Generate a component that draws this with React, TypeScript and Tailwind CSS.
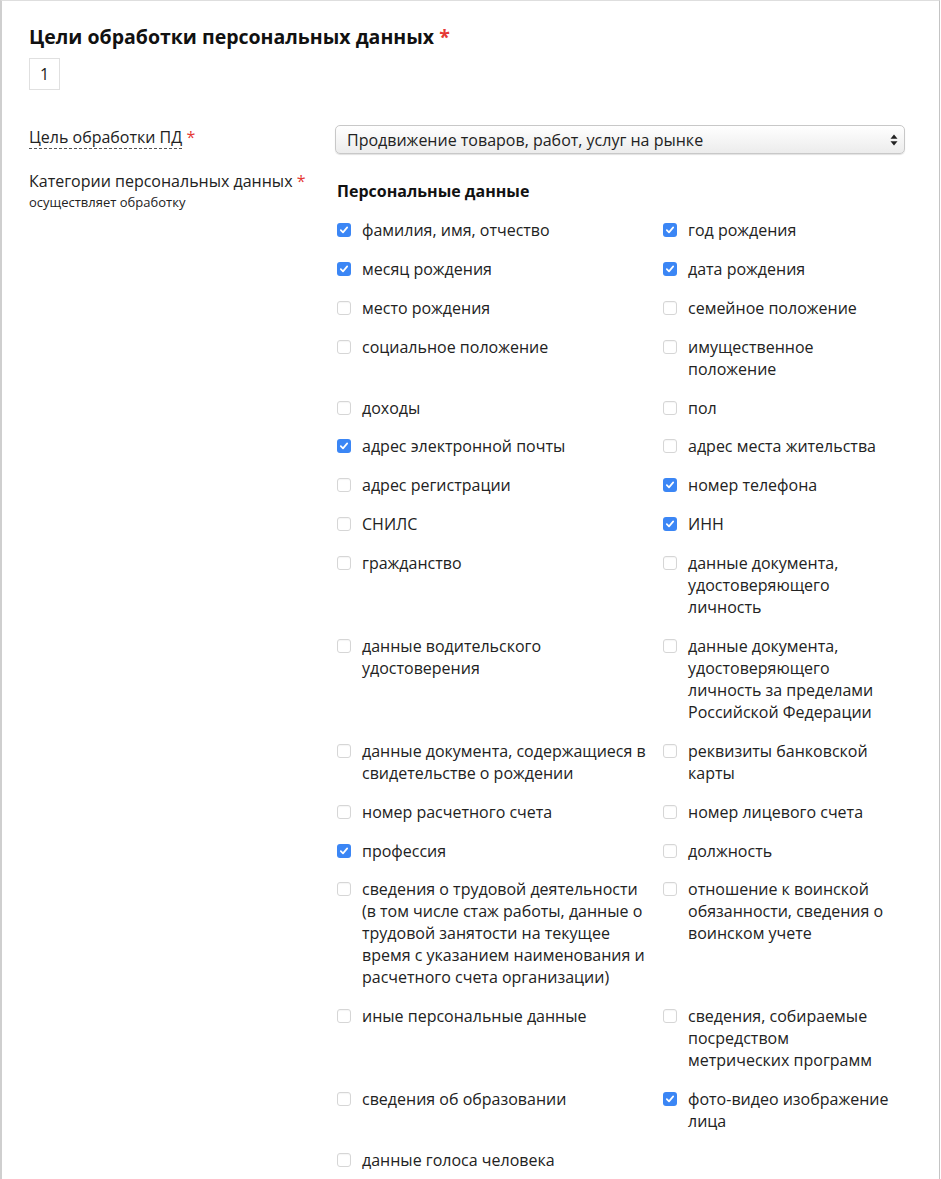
import React from "react";

type Item = { t: string; c?: boolean };

const rows: [Item, Item | null][] = [
  [{ t: "фамилия, имя, отчество", c: true }, { t: "год рождения", c: true }],
  [{ t: "месяц рождения", c: true }, { t: "дата рождения", c: true }],
  [{ t: "место рождения" }, { t: "семейное положение" }],
  [{ t: "социальное положение" }, { t: "имущественное положение" }],
  [{ t: "доходы" }, { t: "пол" }],
  [{ t: "адрес электронной почты", c: true }, { t: "адрес места жительства" }],
  [{ t: "адрес регистрации" }, { t: "номер телефона", c: true }],
  [{ t: "СНИЛС" }, { t: "ИНН", c: true }],
  [{ t: "гражданство" }, { t: "данные документа, удостоверяющего личность" }],
  [
    { t: "данные водительского удостоверения" },
    { t: "данные документа, удостоверяющего личность за пределами Российской Федерации" },
  ],
  [
    { t: "данные документа, содержащиеся в свидетельстве о рождении" },
    { t: "реквизиты банковской карты" },
  ],
  [{ t: "номер расчетного счета" }, { t: "номер лицевого счета" }],
  [{ t: "профессия", c: true }, { t: "должность" }],
  [
    {
      t: "сведения о трудовой деятельности (в том числе стаж работы, данные о трудовой занятости на текущее время с указанием наименования и расчетного счета организации)",
    },
    { t: "отношение к воинской обязанности, сведения о воинском учете" },
  ],
  [{ t: "иные персональные данные" }, { t: "сведения, собираемые посредством метрических программ" }],
  [{ t: "сведения об образовании" }, { t: "фото-видео изображение лица", c: true }],
  [{ t: "данные голоса человека" }, null],
];

function Check({ checked }: { checked?: boolean }) {
  if (checked) {
    return (
      <span className="mt-[4px] flex h-[14px] w-[14px] shrink-0 items-center justify-center rounded-[3px] bg-[#3b86f5]">
        <svg width="10" height="10" viewBox="0 0 10 10" fill="none">
          <path d="M1.8 5.2 L4 7.4 L8.2 2.4" stroke="white" strokeWidth="1.7" strokeLinecap="round" strokeLinejoin="round" />
        </svg>
      </span>
    );
  }
  return <span className="mt-[4px] h-[14px] w-[14px] shrink-0 rounded-[3px] border border-[#d6d6d6] bg-white shadow-[inset_0_1px_1px_rgba(0,0,0,0.04)]" />;
}

function Cell({ item, right }: { item: Item; right?: boolean }) {
  return (
    <label className={`flex items-start gap-[11px] ${right ? "pr-[13px]" : "pr-[8px]"}`}>
      <Check checked={item.c} />
      <span className="text-[16px] leading-[22px] text-[#222]">{item.t}</span>
    </label>
  );
}

export default function App() {
  return (
    <div
      className="min-h-[1179px] w-[940px] border-t border-l-2 border-r border-t-[#dedede] border-l-[#cfcfcf] border-r-[#c4c4c4] bg-white"
      style={{ fontFamily: '"Open Sans", "Noto Sans", sans-serif' }}
    >
      <div className="pl-[27px] pr-[33px] pt-[23px]">
        <h2 className="text-[19.5px] font-bold leading-[26px] text-[#111]">
          Цели обработки персональных данных <span className="text-[#e53935]">*</span>
        </h2>
        <div className="mt-[8px] flex h-[32px] w-[31px] items-center justify-center border border-[#e0e0e0] text-[16px] text-[#222]">
          1
        </div>

        <div className="mt-[35px] grid grid-cols-[306px_570px]">
          <div className="pt-[1px] text-[16px] leading-[22px] text-[#222]">
            <span className="border-b border-dashed border-[#555]">Цель обработки ПД</span>{" "}
            <span className="text-[#e53935]">*</span>
          </div>
          <div className="relative flex h-[29px] items-center rounded-[5px] border border-[#c8c8c8] bg-gradient-to-b from-white to-[#ececec] pl-[11px] shadow-[0_1px_1px_rgba(0,0,0,0.12)]">
            <span className="text-[16px] text-[#222]">Продвижение товаров, работ, услуг на рынке</span>
            <svg className="absolute right-[6px] top-[8px]" width="8" height="12" viewBox="0 0 8 12">
              <path d="M4 0.5 L7.5 4.8 L0.5 4.8 Z" fill="#222" />
              <path d="M4 11.5 L7.5 7.2 L0.5 7.2 Z" fill="#222" />
            </svg>
          </div>
        </div>

        <div className="mt-[16px] grid grid-cols-[308px_567px]">
          <div>
            <div className="text-[16px] leading-[22px] text-[#222]">
              Категории персональных данных <span className="text-[#e53935]">*</span>
            </div>
            <div className="mt-[1px] text-[13px] leading-[18px] text-[#222]">осуществляет обработку</div>
          </div>
          <div className="pt-[10px]">
            <div className="text-[16px] font-bold leading-[22px] text-[#111]">Персональные данные</div>
            <div className="mt-[17px] grid grid-cols-[326px_241px] gap-y-[16.875px]">
              {rows.map(([l, r], i) => (
                <React.Fragment key={i}>
                  <Cell item={l} />
                  {r ? <Cell item={r} right /> : <div />}
                </React.Fragment>
              ))}
            </div>
          </div>
        </div>
      </div>
    </div>
  );
}
